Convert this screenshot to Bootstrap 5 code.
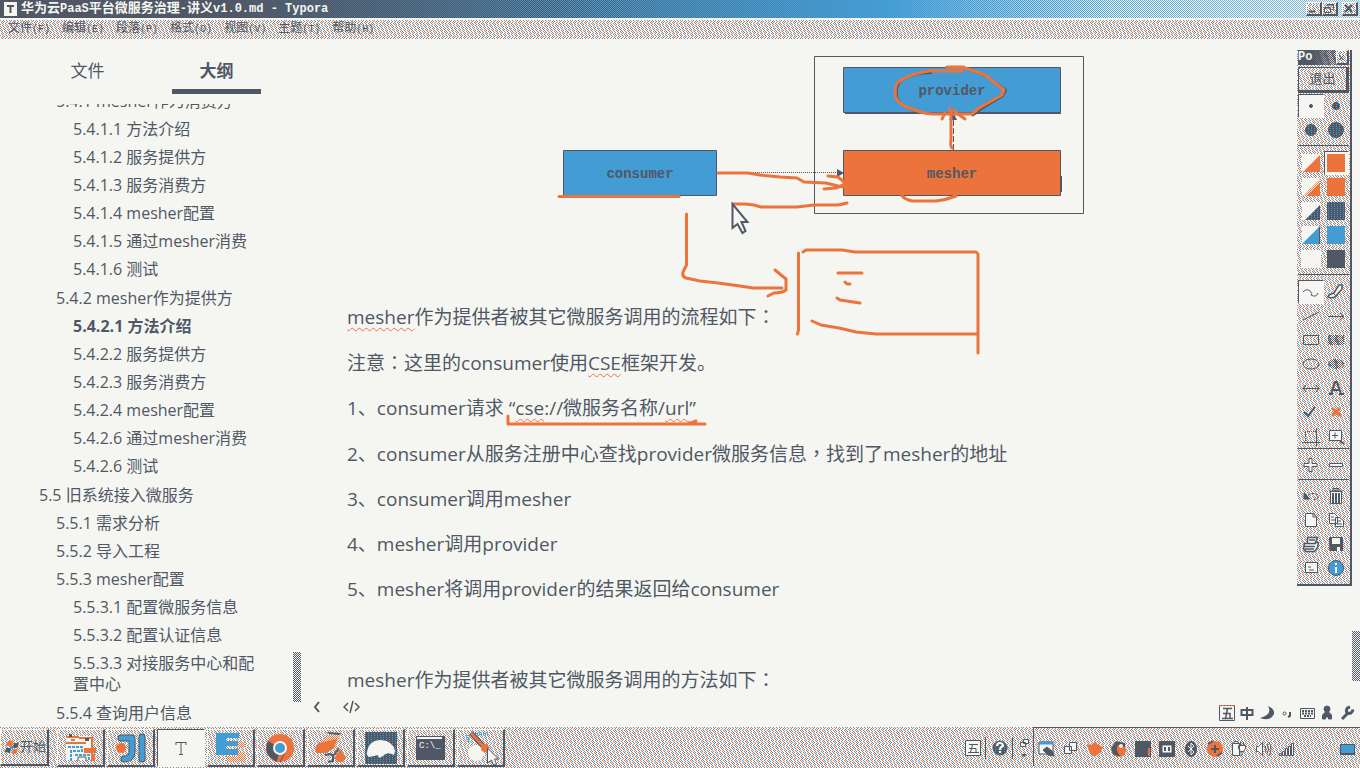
<!DOCTYPE html>
<html lang="zh-CN">
<head>
<meta charset="utf-8">
<meta name="viewport" content="width=device-width, initial-scale=1">
<title>华为云PaaS平台微服务治理-讲义v1.0.md - Typora</title>
<link href="https://cdn.jsdelivr.net/npm/bootstrap@5.3.0/dist/css/bootstrap.min.css" rel="stylesheet">
<style>
:root{--paper:#f5f6f1;--ink:#505866;--hot:#ec743c;--sky:#449cd4;
--dots:url("data:image/svg+xml,%3Csvg xmlns='http://www.w3.org/2000/svg' width='11' height='15' shape-rendering='crispEdges'%3E%3Cg fill='none' stroke-dasharray='1 5 1 4'%3E%3Cpath stroke='%23449cd4' d='M-11 .5H19M-7 1.5H19M-8 2.5H19M-1 3.5H19M-11 4.5H19M-4 5.5H19M-3 6.5H19M-10 7.5H19M-6 8.5H19M-2 9.5H19M-9 10.5H19M-5 11.5H19M-4 12.5H19M-8 13.5H19M-1 14.5H19'/%3E%3Cpath transform='translate(-8 0)' stroke='%23ec743c' d='M-11 .5H19M-7 1.5H19M-8 2.5H19M-1 3.5H19M-11 4.5H19M-4 5.5H19M-3 6.5H19M-10 7.5H19M-6 8.5H19M-2 9.5H19M-9 10.5H19M-5 11.5H19M-4 12.5H19M-8 13.5H19M-1 14.5H19'/%3E%3C/g%3E%3C/svg%3E");
--check:url("data:image/svg+xml,%3Csvg xmlns='http://www.w3.org/2000/svg' width='2' height='2' shape-rendering='crispEdges'%3E%3Cpath fill='%23449cd4' d='M0 0h1v1h-1zM1 1h1v1h-1z'/%3E%3C/svg%3E");
--grip:url("data:image/svg+xml,%3Csvg xmlns='http://www.w3.org/2000/svg' width='2' height='2' shape-rendering='crispEdges'%3E%3Cpath fill='%23505866' d='M0 0h1v1h-1zM1 1h1v1h-1z'/%3E%3C/svg%3E")}
body{background:var(--paper);color:var(--ink);font-family:"Open Sans","Noto Sans CJK SC",sans-serif;font-size:17px;line-height:21px}
button{border:0;padding:0;color:inherit;background:none}
svg{display:block}
.dotted{background:var(--paper) var(--dots)}
.raised{border:1px solid var(--paper);border-right:2px solid var(--ink);border-bottom:2px solid var(--ink)}
.sunken{background:var(--paper);border:1px solid var(--paper);border-left-color:var(--ink);border-top-color:var(--ink)}
.bitmap{font-family:"Liberation Mono","Noto Sans CJK SC",monospace}

.titlebar{height:18px;padding-right:2px;color:var(--paper);font-size:13px;line-height:18px;font-weight:700;background:linear-gradient(90deg,var(--ink) 41%,var(--sky) 65%,var(--paper) 82%)}
.titlebar::before{content:"";position:absolute;inset:0;background:var(--check);-webkit-mask-image:linear-gradient(90deg,transparent 17%,#000 44%,#000 78%,rgba(0,0,0,.6));mask-image:linear-gradient(90deg,transparent 17%,#000 44%,#000 78%,rgba(0,0,0,.6))}
.latin{font-size:12px}
.winbtn{width:16px;height:14px;color:var(--ink)}
.menubar{height:21px;padding-left:8px;gap:12px;border-top:2px solid var(--paper);font-size:12px;line-height:17px}
.menubar .latin{font-size:10px}

.sidebar{width:303px}
.tabs{padding-left:43px;gap:40px;height:65px}
.tabs button{width:89px;height:55px;padding-top:12px;border-bottom:5px solid transparent}
.tabs .active{font-weight:700;border-color:var(--ink)}
.outline{font-size:16px}
.outline ul{list-style:none;margin:0 0 1px;padding:0 0 0 17px}
.outline>ul{margin-top:-16px;padding-left:39px;padding-right:40px}
.outline a{display:block;padding:3px 0 4px;color:inherit;text-decoration:none}
.outline .on{font-weight:700}
.grip{background:var(--grip);width:8px;height:50px}
.grip-side{right:2px;bottom:25px}
.grip-page{right:0;bottom:46px}

.doc{padding:16px 62px 0 44px;font-size:19px;line-height:30px}
.doc p{margin-bottom:15px}
.doc .figure-box{margin-bottom:86px;overflow:visible}
.spell{text-decoration:underline wavy var(--hot) 1px;text-underline-offset:3px}
.fw{font-family:"Noto Sans CJK TC",sans-serif}
.node-label{font:700 14px "Liberation Mono",monospace;fill:var(--ink);text-anchor:middle}
.pen{fill:none;stroke:var(--hot);stroke-width:3;stroke-linecap:round;stroke-linejoin:round}
.statusbar{height:32px;padding:4px 5px 0 10px}
.statusbar .modes{gap:20px;padding-bottom:12px}

.palette{right:8px;top:50px;width:55px;padding:0 1px 2px;border-right:2px solid var(--ink);border-bottom:2px solid var(--ink);z-index:3}
.palette-head{height:15px;font-size:12px;line-height:15px;font-weight:700;color:var(--paper);background:linear-gradient(90deg,var(--ink) 30%,transparent 80%),var(--grip)}
.palette-exit{height:26px;font-size:13px;border-width:1px 3px 3px 1px;border-left-color:var(--ink);border-top-color:var(--ink);margin:2px 0 1px}
.tools{display:grid;grid-template-columns:1fr 1fr;padding-bottom:3px}
.tools+.tools{border-top:1px solid var(--ink);padding-top:5px}
.tools+.tools.tight{padding-top:4px;padding-bottom:2px}
.tools button{height:24px;display:grid;place-items:center}
.tools svg,.tray svg{fill:none;stroke:var(--ink);stroke-width:1}

.taskbar{height:41px;padding:2px 0 2px 0}
.task-list{gap:2px}
.task{width:48px;height:38px;display:grid;place-items:center}
.start{width:49px;font-size:13px}
.tray button{width:24px;height:38px;display:grid;place-items:center}
.tray .tray-narrow{width:18px}
.tray .tray-end{margin-left:37px}
.tray-box{border-top:1px solid var(--ink);border-left:1px solid var(--ink);margin-top:-2px;padding:2px 0 0 1px}
.tray .tick{border-left:1px solid var(--ink);height:22px;margin-right:2px}
</style>
</head>
<body>
<svg width="0" height="0" class="position-absolute" aria-hidden="true"><defs>
<pattern id="mix" width="3" height="2" patternUnits="userSpaceOnUse" shape-rendering="crispEdges"><path fill="#505866" d="M0 0h3v2H0z"/><path fill="#449cd4" d="M1 0h1v1H1z"/></pattern>
<pattern id="chk" width="2" height="2" patternUnits="userSpaceOnUse" shape-rendering="crispEdges"><path fill="#505866" d="M0 0h1v1h-1zM1 1h1v1h-1z"/></pattern>
<pattern id="hotchk" width="2" height="2" patternUnits="userSpaceOnUse" shape-rendering="crispEdges"><path fill="#f5f6f1" d="M0 0h2v2h-2z"/><path fill="#ec743c" d="M0 0h1v1h-1zM1 1h1v1h-1z"/></pattern>
</defs></svg>
<div class="vh-100 d-flex flex-column overflow-hidden position-relative">

<header>
<div class="titlebar bitmap position-relative d-flex align-items-center">
  <svg class="position-relative ms-1" width="13" height="14"><path fill="#f5f6f1" d="M0 0h13v14H0z"/><path d="M3 4h7M6.500 4v7" stroke="#505866" stroke-width="2" fill="none"/></svg>
  <div class="position-relative flex-grow-1 ms-1 text-nowrap">华为云<span class="latin">PaaS</span>平台微服务治理<span class="latin">-</span>讲义<span class="latin">v1.0.md - Typora</span></div>
  <button class="winbtn raised dotted position-relative" aria-label="最小化"><svg width="12" height="11"><path d="M2 8.500h6" stroke="#505866" stroke-width="2"/></svg></button>
  <button class="winbtn raised dotted position-relative me-1" aria-label="还原"><svg width="12" height="11"><path d="M4.500 3V1.500h6v5H9M1.500 4.500h6v5h-6zM4 2h7M1 5h7" stroke="#505866" fill="none"/></svg></button>
  <button class="winbtn raised dotted position-relative" aria-label="关闭"><svg width="12" height="11"><path d="M2 2l7 7M9 2l-7 7" stroke="#505866" stroke-width="2"/></svg></button>
</div>
<nav class="menubar dotted bitmap d-flex">
  <button>文件<span class="latin">(F)</span></button><button>编辑<span class="latin">(E)</span></button><button>段落<span class="latin">(P)</span></button><button>格式<span class="latin">(O)</span></button><button>视图<span class="latin">(V)</span></button><button>主题<span class="latin">(T)</span></button><button>帮助<span class="latin">(H)</span></button>
</nav>
</header>

<div class="flex-grow-1 d-flex overflow-hidden position-relative">
<aside class="sidebar flex-shrink-0 d-flex flex-column position-relative">
  <div class="tabs d-flex flex-shrink-0"><button>文件</button><button class="active">大纲</button></div>
  <nav class="outline overflow-hidden">
  <ul>
    <li><ul>
      <li><a href="#">5.4.1 mesher作为消费方</a><ul>
        <li><a href="#">5.4.1.1 方法介绍</a></li><li><a href="#">5.4.1.2 服务提供方</a></li><li><a href="#">5.4.1.3 服务消费方</a></li><li><a href="#">5.4.1.4 mesher配置</a></li><li><a href="#">5.4.1.5 通过mesher消费</a></li><li><a href="#">5.4.1.6 测试</a></li></ul></li>
      <li><a href="#">5.4.2 mesher作为提供方</a><ul>
        <li><a href="#" class="on">5.4.2.1 方法介绍</a></li><li><a href="#">5.4.2.2 服务提供方</a></li><li><a href="#">5.4.2.3 服务消费方</a></li><li><a href="#">5.4.2.4 mesher配置</a></li><li><a href="#">5.4.2.6 通过mesher消费</a></li><li><a href="#">5.4.2.6 测试</a></li></ul></li></ul></li>
    <li><a href="#">5.5 旧系统接入微服务</a><ul>
      <li><a href="#">5.5.1 需求分析</a></li><li><a href="#">5.5.2 导入工程</a></li>
      <li><a href="#">5.5.3 mesher配置</a><ul>
        <li><a href="#">5.5.3.1 配置微服务信息</a></li><li><a href="#">5.5.3.2 配置认证信息</a></li><li><a href="#">5.5.3.3 对接服务中心和配置中心</a></li></ul></li>
      <li><a href="#">5.5.4 查询用户信息</a></li></ul></li>
  </ul>
  </nav>
  <div class="grip grip-side position-absolute"></div>
</aside>

<main class="flex-grow-1 d-flex flex-column overflow-hidden">
  <article class="doc flex-grow-1 overflow-hidden">
    <svg class="figure-box mx-auto position-relative" width="524" height="160" viewBox="561 55 524 160" role="img" aria-label="mesher 调用流程">
      <g stroke="#505866">
      <path d="M814.500 56.500h269v157h-269z" fill="none"/>
      <path d="M843.500 67.500h217v45h-217zM563.500 150.500h153v45h-153z" fill="#449cd4"/>
      <path d="M843.500 150.500h217v45h-217z" fill="#ec743c"/>
      <path d="M845 113.500h216M1061.500 176v16" />
      <path d="M717 172.500h120" stroke-dasharray="1 1"/><path d="M953.500 150v-36" stroke-dasharray="6 2"/></g>
      <path d="M837 169l7 4-7 4zM949 120l4-8 4 8z" fill="#505866"/>
      <text class="node-label" x="952" y="95">provider</text><text class="node-label" x="952" y="178">mesher</text><text class="node-label" x="640" y="178">consumer</text>
      <path d="M932 73q-22 0-32 9-4 4-3 15 4 10 18 14M972 116q5-3 8-6l23-14 3-6-20-14-19-7" fill="none" stroke="#505866" stroke-width="2"/>
      <g class="pen">
        <path d="M962 71H929Q908 74 897 83Q894 90 896 98Q900 106 915 110Q925 114 933 114H972L979 108L1002 95L1004 90L985 75L965 68L947 67M950 67h14"/>
        <path d="M952 148Q950 146 951 140V112L949 108M945 113l-3 6M954 110l4 4 7 5"/>
        <path d="M559 196.500H679M718 173H748L760 175 780 177 797 178 804 182 826 183 838 186 843 187M828 176l10 1 6 5M824 189l12-1 7-3M733 204h12l9 1 7 2h36l17-2h24l9-2M902 196Q906 200 912 201H936Q946 200 956 196"/>
        <path d="M686.500 214V265L683 272Q682 277 686 278L700 281 718 283 740 286 753 288H782M775 270l11 9v11q-4 3-12 3l-6 3M798.500 253V330l-1 4M803 252l3-2h36l13 2H976l2 2v99M838 273h24M845 282l2 2h3M837 298l3 2 20 3M812 321l9 4 18 3 17 4 20 2H977"/>
        <path d="M508 416v8H688l8-3M508 424H705"/>
      </g>
      <path d="M732.500 204v24l5-4 5 9 3-2-4-9h6z" fill="#f5f6f1" stroke="#505866" stroke-width="2"/>
    </svg>
    <p><span class="spell">mesher</span>作为提供者被其它微服务调用的流程如下<span class="fw" lang="zh-TW">：</span></p>
    <p>注意<span class="fw" lang="zh-TW">：</span>这里的consumer使用<span class="spell">CSE</span>框架开发。</p>
    <p>1、consumer请求 “<span class="spell">cse</span>://微服务名称/<span class="spell">url</span>”</p>
    <p>2、consumer从服务注册中心查找provider微服务信息<span class="fw" lang="zh-TW">，</span>找到了mesher的地址</p>
    <p>3、consumer调用mesher</p>
    <p>4、mesher调用provider</p>
    <p>5、mesher将调用provider的结果返回给consumer</p>
    <p>&nbsp;</p>
    <p>mesher作为提供者被其它微服务调用的方法如下<span class="fw" lang="zh-TW">：</span></p>
  </article>
  <footer class="statusbar d-flex align-items-center justify-content-between flex-shrink-0">
    <div class="d-flex modes">
      <button aria-label="收起侧栏"><svg width="10" height="14" fill="none" stroke="#505866" stroke-width="2"><path d="M6 2L2 7l4 5"/></svg></button>
      <button aria-label="源代码模式"><svg width="18" height="14" fill="none" stroke="#505866"><path d="M5 3L1 7l4 4M12 3l4 4-4 4M10 1L7 13" stroke-width="1.500"/></svg></button>
    </div>
    <svg width="136" height="20" fill="none" stroke="#505866">
      <path d="M.5 2.500h15v15H.5z"/><path d="M4 5.500h9M4 10.500h7v5M8.500 5.500l-2 10M3 15.500h11" stroke-width="1.500"/><path d="M0 2.500h16" stroke="#ec743c" stroke-dasharray="2 1"/>
      <path d="M22.500 7h11v5h-11zM28 4v13" stroke-width="2"/><path d="M49 3q5 8-8 12q10 4 14-4 1-5-6-8" fill="#505866" stroke="none"/>
      <circle cx="65.500" cy="10.500" r="1.500"/><path d="M71 9v4l-2 1" stroke-width="2"/><path d="M81.500 5.500h14v10h-14z"/><path d="M83 8h11M83 10.500h11M85 13h7" stroke-dasharray="2 1" stroke-width="2"/>
      <circle cx="108" cy="6" r="3" fill="#505866"/><path d="M103.500 16v-4l3-3h3l3 3v4h-3v-2h-3v2z" fill="#505866"/>
      <path d="M123 16l6-6" stroke-width="3"/><path d="M134 6.500q-1 5-6 3.500-2-5 3-6" stroke-width="3"/>
    </svg>
  </footer>
</main>
<div class="grip grip-page position-absolute"></div>
</div>

<section class="palette dotted position-absolute" aria-label="画笔工具">
  <div class="palette-head bitmap d-flex justify-content-between">Po<button aria-label="关闭工具栏" class="raised dotted"><svg width="10" height="11"><path d="M2 3l5 5M7 3l-5 5" stroke="#505866"/></svg></button></div>
  <button class="palette-exit raised bitmap dotted w-100 d-block">退出</button>
  <div class="tools">
    <button class="sunken" aria-label="细"><svg width="20" height="20"><circle cx="10" cy="10" r="1.500" fill="#505866"/></svg></button>
    <button aria-label="中"><svg width="20" height="20"><circle cx="10" cy="10" r="3.500" fill="url(#mix)"/></svg></button>
    <button aria-label="粗"><svg width="20" height="20"><circle cx="10" cy="10" r="5.500" fill="url(#mix)"/></svg></button>
    <button aria-label="特粗"><svg width="20" height="20"><circle cx="10" cy="10" r="7.500" fill="url(#mix)"/></svg></button>
  </div>
  <div class="tools">
    <button aria-label="透明红"><svg width="20" height="20"><path stroke="none" fill="#f5f6f1" d="M1 1h18v18H1z"/><path stroke="none" fill="#ec743c" d="M19 2v17H2z"/></svg></button>
    <button class="sunken" aria-label="红"><svg width="18" height="18"><path stroke="none" fill="#ec743c" d="M0 0h18v18H0z"/></svg></button>
    <button aria-label="透明橙"><svg width="20" height="20"><path stroke="none" fill="#f5f6f1" d="M1 1h18v18H1z"/><path stroke="none" fill="url(#hotchk)" d="M19 2v17H2z"/><path stroke="none" fill="#ec743c" d="M19 6v13H6z"/></svg></button>
    <button aria-label="橙"><svg width="18" height="18"><path stroke="none" fill="#ec743c" d="M0 0h18v18H0z"/></svg></button>
    <button aria-label="透明绿"><svg width="20" height="20"><path stroke="none" fill="#f5f6f1" d="M1 1h18v18H1z"/><path stroke="none" fill="url(#mix)" d="M19 4v15H4z"/></svg></button>
    <button aria-label="绿"><svg width="18" height="18"><path stroke="none" fill="url(#mix)" d="M0 0h18v18H0z"/></svg></button>
    <button aria-label="透明蓝"><svg width="20" height="20"><path stroke="none" fill="#f5f6f1" d="M1 1h18v18H1z"/><path fill="#449cd4" stroke="none" d="M19 1v18H1z"/><path d="M18.500 2v17"/></svg></button>
    <button aria-label="蓝"><svg width="18" height="18"><path stroke="none" fill="#449cd4" d="M0 0h18v18H0z"/></svg></button>
    <button aria-label="白"><svg width="20" height="18"><path stroke="none" fill="#f5f6f1" d="M0 0h20v18H0z"/></svg></button>
    <button aria-label="黑"><svg width="18" height="18"><path stroke="none" fill="#505866" d="M0 0h18v18H0z"/></svg></button>
  </div>
  <div class="tools pb-0">
    <button class="sunken" aria-label="曲线"><svg width="20" height="20"><path d="M2 10q4-4 7-1t1 4q5 3 7-2"/></svg></button>
    <button aria-label="荧光笔"><svg width="20" height="20"><path fill="#f5f6f1" d="M3 13l5-2 5-8h3v4l-7 8-4 1-3-1z" stroke-width="1.500"/><path d="M7 11l3 3"/></svg></button>
    <button aria-label="直线"><svg width="20" height="20"><path d="M2 14L18 6"/></svg></button>
    <button aria-label="箭头"><svg width="20" height="20"><path d="M2 10.500h15M14 7l4 3.500-4 3.500"/></svg></button>
    <button aria-label="矩形"><svg width="20" height="20"><path d="M2.500 5.500h15v9h-15z"/></svg></button>
    <button aria-label="实心矩形"><svg width="20" height="20"><path stroke="none" fill="url(#chk)" d="M2 5h16v10H2z"/></svg></button>
    <button aria-label="椭圆"><svg width="20" height="20"><ellipse cx="10" cy="10" rx="8" ry="5"/></svg></button>
    <button aria-label="实心椭圆"><svg width="20" height="20"><ellipse stroke="none" fill="url(#chk)" cx="10" cy="10" rx="8" ry="5"/></svg></button>
    <button aria-label="双箭头"><svg width="20" height="20"><path d="M2 10.500h16M5 7l-3 3.500 3 3.500M15 7l3 3.500-3 3.500"/></svg></button>
    <button aria-label="文字"><svg width="20" height="20"><path d="M5 16l4-12h2l4 12M7 12h6M3 16h4M13 16h5" stroke-width="2"/></svg></button>
    <button aria-label="勾"><svg width="20" height="20"><path d="M3 10l4 4L14 5" stroke-width="2"/></svg></button>
    <button aria-label="叉"><svg width="20" height="20"><path d="M6 6l9 8M14 6l-8 8" style="stroke:var(--hot);stroke-width:3"/></svg></button>
    <button aria-label="裁剪"><svg width="20" height="20"><path d="M15.500 2v18M1 16.500h18" /><path d="M4 5.500h11M4.500 6v10" stroke-dasharray="1 1"/></svg></button>
    <button aria-label="放大"><svg width="20" height="20"><path fill="#f5f6f1" d="M3.500 4.500h12v10h-12zM6 9.500h6M9 6.500v6"/><path d="M14 15l4 3" stroke-width="2"/></svg></button>
  </div>
  <div class="tools tight">
    <button aria-label="增加"><svg width="20" height="20"><path fill="#f5f6f1" d="M8 3.500h3v5h5v3h-5v5H8v-5H3v-3h5z"/></svg></button>
    <button aria-label="减少"><svg width="20" height="20"><path fill="#f5f6f1" d="M3.500 8.500h13v3h-13z"/></svg></button>
  </div>
  <div class="tools tight">
    <button aria-label="撤销"><svg width="20" height="20"><path d="M4 12q5-6 11-4t-2 6" stroke-dasharray="3 1"/><path fill="#505866" d="M3 7v6h6z"/></svg></button>
    <button aria-label="删除"><svg width="20" height="20"><path fill="#f5f6f1" d="M4.500 5.500h11v12h-11zM3 5h14M7 2.500h6V4H7z"/><path d="M7 7v10M10 7v10M13 7v10" stroke-width="2"/></svg></button>
    <button aria-label="新建"><svg width="20" height="20"><path fill="#f5f6f1" d="M4.500 3.500h8l3 3v10h-11zM12 4v3h3"/></svg></button>
    <button aria-label="复制"><svg width="20" height="20"><path fill="#f5f6f1" d="M3.500 3.500h5l3 3v7h-8zM9.500 7.500h4l4 3v6h-8zM11 11h4M11 14h5M5 7h3M5 10h4"/></svg></button>
    <button aria-label="打印"><svg width="20" height="20"><path fill="#f5f6f1" d="M6.500 3.500h10l-2 5h3l-1 5-3 4h-9l-2-3 1-5h3zM4 9.500h11M3 12.500h11M4 15h9M8 6h6" stroke-width="1.500"/></svg></button>
    <button aria-label="保存"><svg width="20" height="20"><path fill="#505866" d="M3.500 3.500h13v13H4z"/><path stroke="none" fill="#f5f6f1" d="M6 4h8v6H6zM11 13h3v4h-3z"/></svg></button>
    <button aria-label="选项"><svg width="20" height="20"><path fill="#f5f6f1" d="M4.500 4.500h12v10h-12zM7 9h3M8 12h5"/></svg></button>
    <button aria-label="关于"><svg width="20" height="20"><circle cx="10" cy="10" r="7.500" fill="#449cd4"/><path d="M10 5v2M10 9v6" style="stroke:var(--paper);stroke-width:2"/></svg></button>
  </div>
</section>

<footer class="taskbar dotted d-flex flex-shrink-0">
  <button class="raised start bitmap d-flex align-items-center me-2 ps-1 text-nowrap"><svg width="15" height="16"><path fill="#ec743c" d="M2 3q5-3 6 0l-1 5q-3-2-6-1z"/><path fill="#505866" d="M9 4q3 1 5-1l-1 5q-3 2-5 0zM1 9q3-1 5 1l-1 4-5-1z"/><path fill="#ec743c" d="M8 10q3 1 5-1l-1 5q-3 2-5 0z"/><path fill="#449cd4" d="M5 7h3v3H5z"/></svg>开始</button>
  <div class="d-flex task-list me-auto">
    <button class="task raised" aria-label="资源管理器"><svg width="36" height="34"><path fill="#f5f6f1" d="M3 5h26v24H3z"/><path d="M3 6h13M3 12h20M16 7h14M8 9h4M29 6v19" stroke="#ec743c" stroke-width="2"/><path fill="#505866" d="M6 3h3v3H6zM22 7h4v3h-4z"/><path fill="#ec743c" d="M21 17h12v5H21zM28 23h4v7h-4z"/><path d="M5 16h14v4H8v10M12 24h14v6" stroke="#449cd4" stroke-width="2" stroke-dasharray="3 1" fill="none"/><path d="M15 30v-4h8v4" stroke="#505866" fill="none"/></svg></button>
    <button class="task raised" aria-label="IntelliJ IDEA"><svg width="36" height="34"><circle cx="8" cy="17" r="5" fill="#ec743c"/><path d="M8 7h11v15q-1 6-8 6M29 6v22" fill="none" stroke="#505866" stroke-width="7" stroke-linecap="round" stroke-linejoin="round"/><path d="M8 7h11v15q-1 6-8 6M29 6v22" fill="none" stroke="#449cd4" stroke-width="5" stroke-linecap="round" stroke-linejoin="round"/></svg></button>
    <button class="task sunken" aria-label="Typora"><svg width="14" height="18"><path d="M2 3v3M2 3.500h10M12 3v3M7 3v12M5 15.500h4" stroke="#505866" fill="none"/></svg></button>
    <button class="task raised" aria-label="E 编辑器"><svg width="36" height="34"><path fill="url(#hotchk)" d="M22 11h10v6h-8v4h8v10H13v-6h10z"/><path fill="#449cd4" d="M3 2h23v5H13v3h12v5H13v3h12v6H3z"/></svg></button>
    <button class="task raised" aria-label="Chrome"><svg width="36" height="34"><circle cx="17" cy="17" r="14" fill="#ec743c"/><path fill="#505866" d="M17 17L5 10Q-1 24 14 31z"/><path d="M17 31l5-10" stroke="#505866"/><circle cx="17" cy="17" r="7" fill="#f5f6f1"/><circle cx="17" cy="17" r="5" fill="#449cd4"/></svg></button>
    <button class="task raised" aria-label="XMind"><svg width="36" height="34"><path fill="url(#hotchk)" d="M13 4h14l-4 13-18 1z"/><path fill="#ec743c" d="M6 12l18-4-3 9-8 5H3q-2-7 3-10M27 18l3 4 3 4-3 5h-5l-4-4z"/><path fill="#505866" d="M14 1l14 1-2 2-10-1z"/><path d="M12 24l5-1 3 2v5l-5 1M20 25l6-8" stroke="#505866" stroke-width="2" fill="none"/></svg></button>
    <button class="task raised" aria-label="Navicat"><svg width="34" height="34"><path fill="url(#mix)" d="M1 1h32v32H1z"/><path fill="#f5f6f1" d="M3 21q2-12 14-12 12 1 14 11l-1 4q-7-4-11 1l-4 2-1-3-4 1-5 1q-3-2-2-5z"/></svg></button>
    <button class="task raised" aria-label="命令提示符"><svg width="32" height="28"><path fill="#505866" d="M1 2h29v24H1z"/><path fill="#f5f6f1" d="M2 3h25v2H2z"/><text x="4" y="14" font-family="Liberation Mono" font-size="9" fill="#f5f6f1">C:\_</text></svg></button>
    <button class="task raised" aria-label="画笔"><svg width="36" height="34"><path d="M5 4v8M12 3h14" stroke="#449cd4" stroke-dasharray="1 1" stroke-width="3"/><circle cx="13" cy="22" r="8" fill="#f5f6f1"/><path d="M8 2l12 13" stroke="#505866" stroke-width="5"/><path d="M8 2l12 13" stroke="#ec743c" stroke-width="3"/><circle cx="22" cy="17" r="4" fill="#ec743c"/><path fill="#f5f6f1" stroke="#505866" d="M24.500 17v15l4-3 2 5 3-1-2-5h4z"/></svg></button>
  </div>
  <div class="tray d-flex">
    <div class="d-flex align-items-center">
      <button aria-label="五笔输入法"><svg width="18" height="18"><path fill="#f5f6f1" d="M1.500 1.500h15v15h-15z"/><path d="M5 5.500h9M5 9.500h7v4M8.500 5.500l-2 8M4 13.500h11"/></svg></button><span class="tick"></span>
      <button aria-label="帮助"><svg width="18" height="18"><circle cx="9" cy="9" r="7" fill="url(#mix)"/><path d="M6 7q0-3 3-3t3 3q-3 1-3 4M9 12v2" style="stroke:var(--paper);stroke-width:2"/></svg></button><span class="tick"></span>
      <button class="tray-narrow" aria-label="窗口"><svg width="14" height="24"><path fill="#f5f6f1" d="M6.500 3.500h5v4h-5zM3.500 6.500h5v4h-5z"/><path d="M4 18l3 3 3-3z" fill="#505866" stroke="none"/></svg></button>
    </div>
    <div class="tray-box d-flex">
      <button aria-label="截图"><svg width="18" height="18"><path fill="#f5f6f1" d="M1 2h14v12H1z"/><path d="M1 3h14" style="stroke:var(--sky);stroke-width:3"/><path fill="#505866" d="M5 10l4-3 5 4 2 5-6-1z"/></svg></button>
      <button aria-label="层叠窗口"><svg width="18" height="18"><path fill="#f5f6f1" d="M7.500 2.500h7v8h-7zM2.500 6.500h7v7h-7z"/></svg></button>
      <button aria-label="安全卫士"><svg width="18" height="18"><path fill="#ec743c" stroke="none" d="M1 4l5 1 4-4 1 3 6 3-2 5-5 4H7l-4-5z"/></svg></button>
      <button aria-label="下载"><svg width="18" height="18"><circle cx="9" cy="10" r="7" fill="#ec743c" stroke="none"/><path fill="#505866" stroke="none" d="M6 1l9 2v4L8 5q-3 5 2 11-8 1-9-8z"/><circle cx="11" cy="6" r="2" fill="#f5f6f1" stroke="none"/></svg></button>
      <button aria-label="终端"><svg width="18" height="18"><path fill="#505866" stroke="none" d="M1 1h16v16H1z"/><path fill="#ec743c" stroke="none" d="M14 8h2v8h-2z"/></svg></button>
      <button aria-label="录屏"><svg width="18" height="18"><path fill="#505866" stroke="none" d="M1 1h16v16H1z"/><path fill="#f5f6f1" d="M4 5h10v8H4z"/><path d="M7 7v4M11 7v4" stroke-width="2"/></svg></button>
      <button aria-label="蓝牙"><svg width="18" height="18"><ellipse cx="9" cy="9" rx="5.500" ry="7.500" fill="#505866"/><path d="M6 6l6 6-3 3V3l3 3-6 6" style="stroke:var(--paper)"/></svg></button>
      <button aria-label="加速"><svg width="18" height="18"><circle cx="9" cy="9" r="8" fill="#ec743c" stroke="none"/><path d="M9 5v8M5 9h8M2 4l5-3M11 16l5-3" stroke-width="2"/></svg></button>
      <button aria-label="电源"><svg width="18" height="18"><path fill="#f5f6f1" d="M2.500 3.500h7v12h-7zM4 1.500h4v2H4zM8.500 5.500h7v3l-2 3h-3l-2-3zM10.500 5V2M13.500 5V2M12 12v3H9"/></svg></button>
      <button aria-label="音量"><svg width="18" height="18"><path fill="#f5f6f1" d="M2.500 6.500h2l4-4v13l-4-4h-2z"/><path d="M11 6q2 3 0 6M13 4q3 5 0 10M15 2q4 7 0 14"/></svg></button>
      <button aria-label="网络"><svg width="18" height="18"><path fill="#f5f6f1" d="M1.500 13.500h2v2h-2zM4.500 11.500h2v4h-2zM7.500 8.500h2v7h-2zM10.500 6.500h2v9h-2zM13.500 3.500h2v12h-2z"/></svg></button>
      <button class="tray-end" aria-label="显示桌面"><svg width="16" height="14"><path fill="#449cd4" d="M.5 2.500h14v10H.5z"/><path d="M0 12h15" stroke-width="2"/></svg></button>
    </div>
  </div>
</footer>
</div>
<script src="https://cdn.jsdelivr.net/npm/bootstrap@5.3.0/dist/js/bootstrap.bundle.min.js"></script>
</body>
</html>
